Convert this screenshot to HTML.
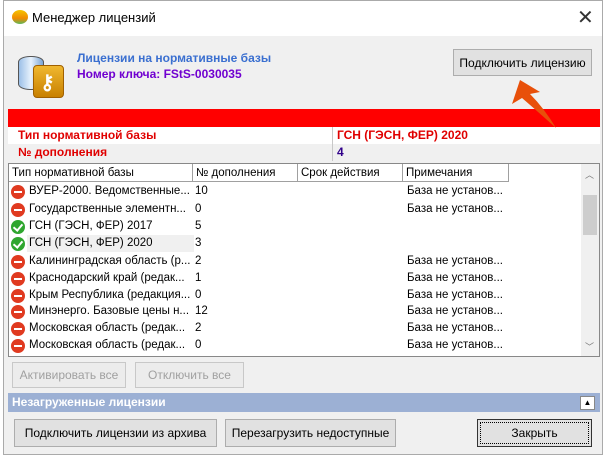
<!DOCTYPE html>
<html><head><meta charset="utf-8"><style>
*{box-sizing:border-box;margin:0;padding:0}
body{width:606px;height:459px;background:#fff;font-family:"Liberation Sans",sans-serif;font-size:12px;position:relative;overflow:hidden;color:#000}
.a{position:absolute}
.btn{position:absolute;background:#e1e1e1;border:1px solid #adadad;text-align:center;font-size:12px;display:flex;align-items:center;justify-content:center}
.row{position:absolute;left:10px;height:17px;width:570px;font-size:11.5px;line-height:17px}
.row span{position:absolute;white-space:nowrap}
.ic{width:14px;height:14px;border-radius:50%;top:2px;left:1px}
.no{background:#e03a20}
.no::after{content:"";position:absolute;left:3px;top:6px;width:8px;height:2px;background:#fff}
.ok{background:#2fa62f}
.ok::after{content:"";position:absolute;left:4px;top:2px;width:4px;height:7px;border-right:2px solid #fff;border-bottom:2px solid #fff;transform:rotate(40deg)}
.hd{position:absolute;top:0;height:18px;border-right:1px solid #a0a0a0;border-bottom:1px solid #a0a0a0;background:#fff;padding-left:3px;line-height:18px;font-size:11.5px}
</style></head><body>
<div class="a" style="left:3px;top:0;width:600px;height:455px;border:1px solid #aaa;background:#f0f0f0"></div>
<div class="a" style="left:4px;top:1px;width:598px;height:35px;background:#fff"></div>
<div class="a" style="left:12px;top:10px;width:16px;height:14px;border-radius:50%;background:linear-gradient(#f5c400,#f08a00 60%,#5cb85c)"></div>
<div class="a" style="left:32px;top:10px;font-size:13px">Менеджер лицензий</div>
<div class="a" style="left:577px;top:5px;font-size:20px;color:#333">✕</div>
<div class="a" style="left:18px;top:56px;width:26px;height:34px;border:1px solid #555;border-radius:12px/6px;background:linear-gradient(90deg,#9cc0e8,#e8f2fc,#7aa4d4)"></div>
<div class="a" style="left:33px;top:65px;width:31px;height:33px;border-radius:4px;background:linear-gradient(#f0b830,#c88000);border:1px solid #a06000"></div>
<div class="a" style="left:40px;top:70px;color:#fff;font-size:20px;font-weight:bold">⚷</div>
<div class="a" style="left:77px;top:51px;color:#3a6fd0;font-weight:bold;font-size:12px">Лицензии на нормативные базы</div>
<div class="a" style="left:77px;top:67px;color:#7000d0;font-weight:bold;font-size:12px">Номер ключа: FStS-0030035</div>
<div class="btn" style="left:453px;top:49px;width:139px;height:27px">Подключить лицензию</div>
<div class="a" style="left:8px;top:109px;width:592px;height:18px;background:#ff0000"></div>
<div class="a" style="left:8px;top:127px;width:592px;height:17px;background:#fff"></div>
<div class="a" style="left:8px;top:144px;width:592px;height:17px;background:#f0f0f0"></div>
<div class="a" style="left:332px;top:127px;width:1px;height:34px;background:#c8c8c8"></div>
<div class="a" style="left:18px;top:128px;color:#e00000;font-weight:bold">Тип нормативной базы</div>
<div class="a" style="left:18px;top:145px;color:#e00000;font-weight:bold">№ дополнения</div>
<div class="a" style="left:337px;top:128px;color:#e00000;font-weight:bold">ГСН (ГЭСН, ФЕР) 2020</div>
<div class="a" style="left:337px;top:145px;color:#30008a;font-weight:bold">4</div>
<svg class="a" style="left:500px;top:74px" width="70" height="60"><path d="M20 6 L12 30 L22 24 Q36 36 56 54 Q44 34 30 20 L40 18 Z" fill="#e8500a"/></svg>
<div class="a" style="left:8px;top:163px;width:592px;height:194px;background:#fff;border:1px solid #888"></div>
<div class="a" style="left:9px;top:164px;width:571px;height:19px">
<div class="hd" style="left:0;width:184px">Тип нормативной базы</div>
<div class="hd" style="left:184px;width:105px">№ дополнения</div>
<div class="hd" style="left:289px;width:105px">Срок действия</div>
<div class="hd" style="left:394px;width:106px">Примечания</div>
</div>
<div class="a" style="left:581px;top:164px;width:18px;height:192px;background:#f0f0f0"></div>
<div class="a" style="left:583px;top:195px;width:14px;height:40px;background:#cdcdcd"></div>
<div class="a" style="left:585px;top:168px;font-size:9px;color:#777">︿</div>
<div class="a" style="left:585px;top:340px;font-size:9px;color:#777">﹀</div>
<div class="row" style="top:183px"><span class="ic no"></span><span style="left:19px">ВУЕР-2000. Ведомственные...</span><span style="left:185px">10</span><span style="left:397px">База не установ...</span></div>
<div class="row" style="top:201px"><span class="ic no"></span><span style="left:19px">Государственные элементн...</span><span style="left:185px">0</span><span style="left:397px">База не установ...</span></div>
<div class="row" style="top:218px"><span class="ic ok"></span><span style="left:19px">ГСН (ГЭСН, ФЕР) 2017</span><span style="left:185px">5</span></div>
<div class="row" style="top:235px"><span class="ic ok"></span><span style="left:17px;width:167px;height:17px;background:#f0f0f0;padding-left:2px">ГСН (ГЭСН, ФЕР) 2020</span><span style="left:185px">3</span></div>
<div class="row" style="top:253px"><span class="ic no"></span><span style="left:19px">Калининградская область (р...</span><span style="left:185px">2</span><span style="left:397px">База не установ...</span></div>
<div class="row" style="top:270px"><span class="ic no"></span><span style="left:19px">Краснодарский край (редак...</span><span style="left:185px">1</span><span style="left:397px">База не установ...</span></div>
<div class="row" style="top:287px"><span class="ic no"></span><span style="left:19px">Крым Республика (редакция...</span><span style="left:185px">0</span><span style="left:397px">База не установ...</span></div>
<div class="row" style="top:303px"><span class="ic no"></span><span style="left:19px">Минэнерго. Базовые цены н...</span><span style="left:185px">12</span><span style="left:397px">База не установ...</span></div>
<div class="row" style="top:320px"><span class="ic no"></span><span style="left:19px">Московская область (редак...</span><span style="left:185px">2</span><span style="left:397px">База не установ...</span></div>
<div class="row" style="top:337px"><span class="ic no"></span><span style="left:19px">Московская область (редак...</span><span style="left:185px">0</span><span style="left:397px">База не установ...</span></div>
<div class="btn" style="left:12px;top:362px;width:114px;height:26px;color:#a0a0a0;background:#ececec;border-color:#c8c8c8">Активировать все</div>
<div class="btn" style="left:135px;top:362px;width:109px;height:26px;color:#a0a0a0;background:#ececec;border-color:#c8c8c8">Отключить все</div>
<div class="a" style="left:8px;top:393px;width:592px;height:19px;background:#9cb0d4"></div>
<div class="a" style="left:12px;top:395px;color:#fff;font-weight:bold">Незагруженные лицензии</div>
<div class="a" style="left:580px;top:396px;width:15px;height:14px;background:#fff;border:1px solid #888;font-size:8px;text-align:center;line-height:12px">▲</div>
<div class="btn" style="left:14px;top:419px;width:203px;height:28px">Подключить лицензии из архива</div>
<div class="btn" style="left:225px;top:419px;width:171px;height:28px">Перезагрузить недоступные</div>
<div class="btn" style="left:477px;top:419px;width:115px;height:28px;border:1px solid #333;outline:1px dotted #000;outline-offset:-4px">Закрыть</div>
</body></html>
